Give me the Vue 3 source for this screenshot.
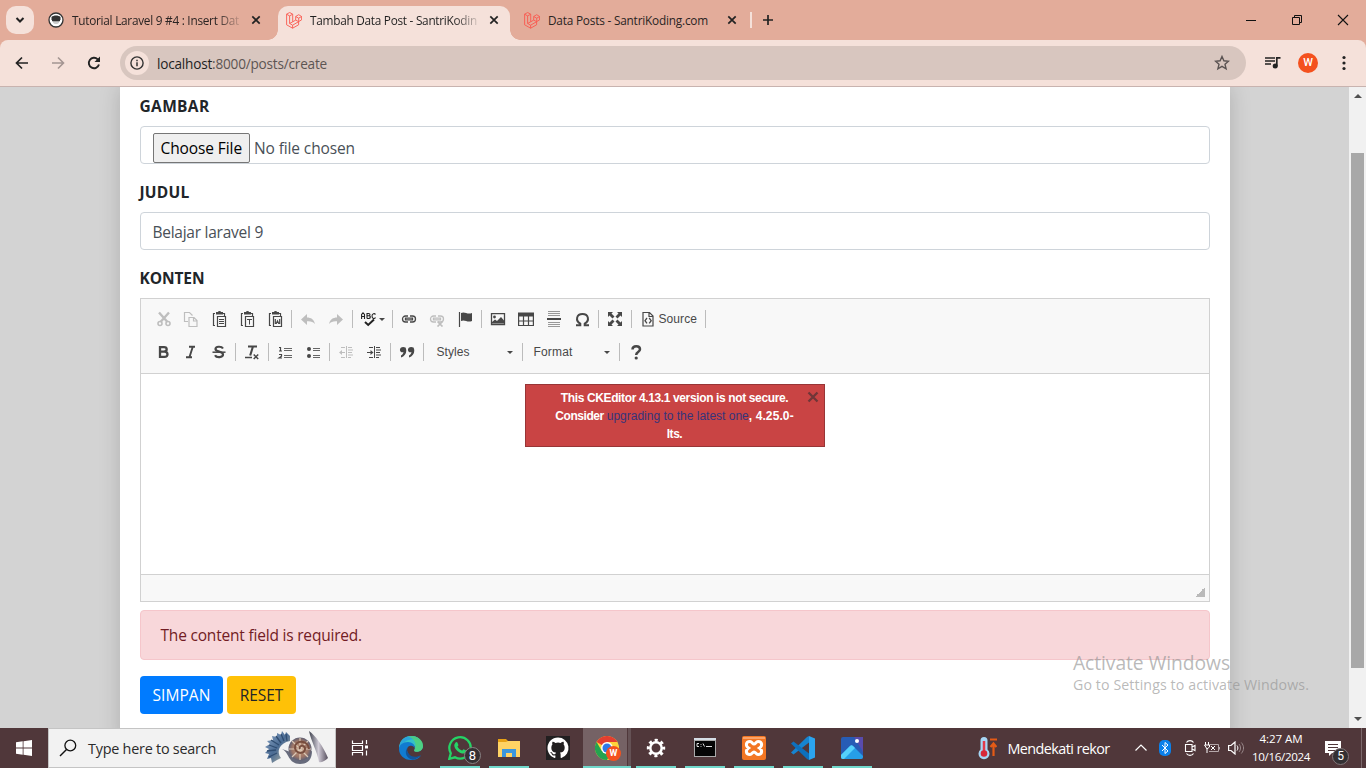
<script setup>
// Spreads the letters of an element so that its text takes a given width.
const vFit = {
  mounted(el, { value }) {
    const range = document.createRange()
    range.selectNodeContents(el)
    const width = range.getBoundingClientRect().width
    el.style.letterSpacing = (value - width) / el.textContent.length + 'px'
  }
}

const K = '#474747'
const clip = `<path d="M4 2.5H2.5v12H4" fill="none" stroke="${K}" stroke-width="1.2"/><path d="M5 1h2a1.5 1 0 0 1 3 0h2v2.500H5z" fill="${K}"/><path d="M12 2.500h1.500v2.500M6.500 5.500h8v10h-8z" fill="none" stroke="${K}" stroke-width="1.200"/>`
const unlinkPath = 'M7 5H4.500a3 3 0 0 0 0 6H7M9 5h2.500a3 3 0 0 1 0 6H9M4.500 7.200h7v1.600h-7z'

const icons = {
  cut: `<g fill="none" stroke="${K}"><path d="M4 1.500L12.500 11M14 1.500L5.500 11" stroke-width="2.400"/><circle cx="5" cy="12.500" r="2" stroke-width="1.600"/><circle cx="13" cy="12.500" r="2" stroke-width="1.600"/></g>`,
  copy: `<path d="M5 10.500H1.500v-9h5l3 3M6 6.500h5l3 3v6H6zM10.500 6.500V10H14" fill="none" stroke="${K}" stroke-width="1.200"/>`,
  paste: clip + `<path d="M8 8.500h5M8 10.500h5M8 12.500h5" stroke="${K}"/>`,
  pasteText: clip + `<path d="M8 8.500h5M10.500 8.500v5" stroke="${K}" fill="none"/>`,
  pasteWord: clip + `<path d="M8.300 8v4.500h1L10.500 10l1.200 2.500h1V8" stroke="${K}" fill="none" stroke-width="1.200"/>`,
  undo: `<path d="M1 8.500L7 3v3.500c4 0 7 2 8 6.500-2-2.300-4.500-3-8-2.700V14z" fill="${K}"/>`,
  redo: `<path d="M15 8.500L9 3v3.500c-4 0-7 2-8 6.500 2-2.300 4.500-3 8-2.700V14z" fill="${K}"/>`,
  spell: `<g fill="none" stroke="#222" stroke-width="1.100"><path d="M.6 8V3.500L2 1.800l1.500 1.700V8M.6 5.500h3M6 7.500v-5h1.500c2 0 2 2.300 0 2.300H6h1.700c2.300 0 2 2.700 0 2.700H6M14.500 3.500c-.7-1.200-3.500-1.500-3.500 1.500s2.700 3 3.500 1.500"/><path d="M4 11l3.200 3L13 8.500" stroke-width="2"/></g>`,
  link: `<path d="${unlinkPath}" fill="none" stroke="${K}" stroke-width="1.300"/>`,
  unlink: `<path d="${unlinkPath}" fill="none" stroke="${K}" stroke-width="1.300"/><path d="M8.500 10.500l5 5M13.500 10.500l-5 5" stroke="${K}" stroke-width="1.700"/>`,
  anchor: `<path d="M2.500 1v15" stroke="${K}" stroke-width="1.200"/><path d="M4 2c4-2 6 2 11 0v8c-5 2-7-2-11 0z" fill="${K}"/>`,
  image: `<path d="M1.500 2.700h13v10.800h-13z" fill="none" stroke="${K}" stroke-width="1.300"/><circle cx="4.500" cy="6" r="1.400" fill="${K}"/><path d="M2 12.500V11l3-2.500 2 1.500 4-4 3 3.500v3z" fill="${K}"/>`,
  table: `<path d="M0 1.500h16v4H0z" fill="${K}"/><path d="M.6 5v9.500h14.800V5M0 10h16M5.500 5v9M10.500 5v9" fill="none" stroke="${K}" stroke-width="1.200"/>`,
  hr: `<path d="M2 .5h12M2 2.500h12M2 4.500h12M2 11.500h12M2 13.500h12M2 15.500h12" stroke="#999"/><path d="M1 8h14" stroke="${K}" stroke-width="2"/>`,
  omega: `<path d="M2 14.200h4.300v-1.500C1 9.500 2.500 3 8.500 3s7.500 6.500 2.200 9.700v1.500H15" fill="none" stroke="${K}" stroke-width="2"/>`,
  maximize: `<path d="M1 1h5L4.500 2.500l3 3-2 2-3-3L1 6zM15 1v5l-1.500-1.500-3 3-2-2 3-3L10 1zM1 15v-5l1.500 1.500 3-3 2 2-3 3L6 15zM15 15h-5l1.500-1.500-3-3 2-2 3 3L15 10z" fill="${K}"/>`,
  source: `<path d="M3 1.500h6.500l3.500 3.500v10H3zM9 2v3.500h4" fill="none" stroke="${K}" stroke-width="1.200"/><path d="M7 7l-2 2.700 2 2.700M9.200 7l2 2.700-2 2.700" fill="none" stroke="${K}" stroke-width="1.300"/>`,
  bold: `<path d="M5 3.100h4c3.600 0 3.600 4.500 0 4.500H5h4.500c4 0 4 5.300 0 5.300H5zV13" fill="none" stroke="${K}" stroke-width="2.300"/>`,
  italic: `<path d="M6 2.700h6M3 13.300h6M9.700 3L6.500 13" fill="none" stroke="${K}" stroke-width="1.900"/>`,
  strike: `<path d="M12 4.500C10.500 2 4.500 2.200 4.500 5c0 3.300 7.500 2 7.500 5.500 0 3.200-6.500 3.500-8 .700" fill="none" stroke="${K}" stroke-width="2.200"/><path d="M1.500 8.200h13" stroke="${K}" stroke-width="1.500"/>`,
  removeFormat: `<path d="M4 2.500h9M8.800 3L6.200 11.500" fill="none" stroke="${K}" stroke-width="2.100"/><path d="M1 13.500h7M9.700 10.500l4.500 4.500M14.200 10.500L9.700 15" stroke="${K}" stroke-width="1.500"/>`,
  numbers: `<path d="M7 4.500h8M7 6.500h8M7 11.500h8M7 13.500h8" stroke="#666"/><path d="M2 3.500h1.500V7M2 7h3M2 10.500h2.500v1.700L2 14h3" fill="none" stroke="${K}" stroke-width="1.200"/>`,
  bullets: `<path d="M8 4.500h7M8 6.500h7M8 11.500h7M8 13.500h7" stroke="#666"/><circle cx="4" cy="5" r="2" fill="${K}"/><circle cx="4" cy="12" r="2" fill="${K}"/>`,
  outdent: `<path d="M8.500 2v12M10 3.500h4M10 6h5M10 8.500h4M10 11h5M10 13.500h3M3 3.500h4M3 13.500h4M2 8.500h5" stroke="${K}"/><path d="M1 8.500L4 6v5z" fill="${K}"/>`,
  indent: `<path d="M8.500 2v12M10 3.500h4M10 6h5M10 8.500h4M10 11h5M10 13.500h3M3 3.500h4M3 13.500h4M1 8.500h5" stroke="${K}"/><path d="M7.500 8.500l-3-2.500v5z" fill="${K}"/>`,
  quote: `<path d="M6.500 3.500C3 2 .5 4 1 6.500c.5 2 2.800 2 3.500 1.500-.2 2-1.500 3-2.500 3.500v2C6.500 12 8.500 7.500 6.500 3.500zM14.500 3.500C11 2 8.500 4 9 6.500c.5 2 2.800 2 3.500 1.500-.2 2-1.500 3-2.500 3.500v2c4.500-1.500 6.500-6 4.500-10z" fill="${K}"/>`,
  help: `<path d="M4.500 5.500C4.500 1.100 12 1.300 12 5.300c0 3-3.800 2.500-3.800 5.700" fill="none" stroke="${K}" stroke-width="2.500"/><circle cx="8.200" cy="14" r="1.600" fill="${K}"/>`
}

const rows = [
  [
    { i: 'cut', off: 1 }, { i: 'copy', off: 1 }, { i: 'paste' }, { i: 'pasteText' }, { i: 'pasteWord' }, { sep: 1 },
    { i: 'undo', off: 1 }, { i: 'redo', off: 1 }, { sep: 1 },
    { i: 'spell', caret: 1, kind: 'spell' }, { sep: 1 },
    { i: 'link' }, { i: 'unlink', off: 1 }, { i: 'anchor' }, { sep: 1 },
    { i: 'image' }, { i: 'table' }, { i: 'hr' }, { i: 'omega' }, { sep: 1 },
    { i: 'maximize' }, { sep: 1 },
    { i: 'source', text: 'Source', fit: 38.500, kind: 'source' }, { sep: 1 }
  ],
  [
    { i: 'bold' }, { i: 'italic' }, { i: 'strike' }, { sep: 1 },
    { i: 'removeFormat' }, { sep: 1 },
    { i: 'numbers' }, { i: 'bullets' }, { sep: 1 },
    { i: 'outdent', off: 1 }, { i: 'indent' }, { sep: 1 },
    { i: 'quote' }, { sep: 1 },
    { text: 'Styles', fit: 33, caret: 1, kind: 'styles' }, { sep: 1 },
    { text: 'Format', fit: 39, caret: 1, kind: 'format' }, { sep: 1 },
    { i: 'help' }
  ]
]

const laravel = `<path d="M.6 2.200L3.700.500l3 1.700v7.600l3-1.700V4.500l3-1.800 2.900 1.800v3.400l-3 1.700v3.200l-6 3.400-6-3.400zM.6 2.200l3 1.700 3.100-1.700M3.600 3.900v7.500l3 1.800 6-3.500M6.700 9.800l-3.100 1.700M9.700 4.500l3 1.700 2.900-1.700M12.700 6.200v3.500M9.700 8.100l3 1.600M6.600 13.200v3" fill="none" stroke="#f9594f" stroke-width=".9"/>`

const apps = [
  { name: 'edge', art: `<path d="M0 13C0 5 5 0 12 0s12 5 12 10-5 6.500-8 5.500c-1.500-.5-.8-1.500-.3-2.500C16.500 10 14 7 10 7 5 7 1 9.500 0 13z" fill="#35c1c9"/><path d="M0 12C1 4 6 0 12 0c5 0 8 2 10 5-6-3-16-3-22 7z" fill="#2aa6dc"/><path d="M13 0c7 .3 11 5 11 10 0 4-4 6-7 5.700-2-.3-2-1-1.300-2.200C18 8 16 3 9 .500z" fill="#55d66b" opacity=".75"/><path d="M0 13c0-4 4-7 9-7 4 0 7 3 6.500 6-1-2-3-2.800-5-2-3 1-3 5-1 8 3 4.500 8 5 12.500 1.500C20 22.500 16.500 24 12 24 5 24 0 19 0 13z" fill="#117bd1"/><path d="M8 12c-3 5 0 11 6 11.800 3-.5 6.500-2.500 8-4.800-5 3-10 2-12.500-1.500C8 15.500 7.500 14 8 12z" fill="#12549b"/>` },
  { name: 'whatsapp', run: 1, badge: '8', art: `<path d="M1.300 22.800l1.500-5.600A10.700 10.700 0 1 1 7 21.300z" fill="none" stroke="#25d366" stroke-width="2.300"/><path d="M7.200 7c.8-1.200 1.800-1.300 2.300-.3l.9 2.200c.1.500-.9 1.400-1 1.700 1 2 2.500 3.200 4.500 4 .6-.1 1.200-1.500 1.700-1.400l2.500 1.300c.3 2.300-1.900 3.500-4 3-4.500-1-8.600-6-7.700-9z" fill="#25d366"/>` },
  { name: 'files', run: 1, art: `<path d="M1 3h8l2 2h12v4H1z" fill="#e8a215"/><path d="M1 6h8l2-1h12v16H1z" fill="#ffd364"/><path d="M5 21v-8h14v8h-4v-4H9v4z" fill="#3a96dd"/>` },
  { name: 'github', art: `<path d="M0 0h24v24H0z" fill="#211f20"/><path transform="translate(1.500 1.500) scale(1.310)" d="M8 0C3.580 0 0 3.580 0 8c0 3.540 2.290 6.530 5.470 7.590.4.070.55-.17.55-.38v-1.490c-2.230.49-2.690-.95-2.690-.95-.36-.92-.89-1.170-.89-1.170-.73-.5.050-.49.050-.49.810.060 1.230.83 1.230.83.72 1.230 1.880.87 2.340.66.070-.52.28-.87.51-1.070-1.780-.2-3.640-.89-3.640-3.950 0-.87.310-1.590.82-2.150-.08-.2-.36-1.020.08-2.120 0 0 .67-.21 2.200.82a7.600 7.600 0 0 1 4 0c1.530-1.030 2.200-.82 2.200-.82.44 1.100.16 1.920.08 2.120.51.56.82 1.280.82 2.150 0 3.070-1.870 3.750-3.650 3.950.29.25.54.73.54 1.480v2.200c0 .21.150.46.55.38A8 8 0 0 0 8 0z" fill="#fff"/>` },
  { name: 'chrome', run: 1, active: 1, art: `<circle cx="12" cy="12" r="12" fill="#fdd43b"/><path d="M12 12L1.600 6A12 12 0 0 1 22.400 6H12z" fill="#e43e30"/><path d="M1.600 6A12 12 0 0 0 12 24l5.200-9-5.200-3L6.800 15z" fill="#24a350"/><circle cx="12" cy="12" r="5.900" fill="#fff"/><circle cx="12" cy="12" r="4.500" fill="#2f79e8"/>` },
  { name: 'settings', run: 1, art: `<circle cx="12" cy="12" r="5.700" fill="none" stroke="#fff" stroke-width="2.500"/><circle cx="12" cy="12" r="7.700" fill="none" stroke="#fff" stroke-width="3" stroke-dasharray="3.020" stroke-dashoffset="1.500"/>` },
  { name: 'terminal', run: 1, art: `<path d="M1 2h22v19H1z" fill="#aaa"/><path d="M2 5h20v15H2z" fill="#060606"/><path d="M1 2h22v2H1z" fill="#d5dde5"/><path d="M6 7.500H4v3h2M8 8v.8M8 10v.8M10 7.500l1.500 3M13 10.500h6" fill="none" stroke="#ddd"/>` },
  { name: 'xampp', run: 1, art: `<rect width="24" height="24" rx="2" fill="#f37623"/><path d="M1 1h22v2H1z" fill="#faa36a"/><path d="M8 5.500c2 0 2.500 2.500 4 2.500s2-2.500 4-2.500c4.500 0 4.500 4.500 1.500 6.500 3 2 3 6.500-1.500 6.500-2 0-2.500-2.500-4-2.500s-2 2.500-4 2.500c-4.500 0-4.500-4.500-1.500-6.500C3.500 10 3.500 5.500 8 5.500z" fill="none" stroke="#fff" stroke-width="3"/>` },
  { name: 'code', run: 1, art: `<path d="M18 0l6 2.500v19L18 24z" fill="#2ba4ef"/><path d="M18 6.500L2.500 18.500 0 16.500 16 1l2-1z" fill="#1684d0"/><path d="M18 17.500L2.500 5.500 0 7.500 16 23l2 1z" fill="#0d70bd"/>` },
  { name: 'photos', run: 1, art: `<rect x="1" y="1" width="22" height="22" rx="2" fill="#275cb5"/><path d="M14 1h9v15z" fill="#594bac"/><path d="M1 19l9-9c1-1 2-1 3 0l10 10v1a2 2 0 0 1-2 2H3a2 2 0 0 1-2-2z" fill="#269fe8"/><path d="M1 19l9-9c1-1 2-1 3 0l2 2L4 23H3a2 2 0 0 1-2-2z" fill="#55d1fc"/><circle cx="17" cy="5" r="2" fill="#fff"/>` }
]
</script>

<template>
  <div class="screen">
    <header class="tabs">
      <div class="menu"><svg width="12" height="12" viewBox="0 0 12 12"><path d="M2.500 4l3.500 3.500L9.500 4" fill="none" stroke="#222" stroke-width="2" /></svg></div>
      <div class="tab first">
        <svg width="16" height="16" viewBox="0 0 16 16"><circle cx="8" cy="8" r="7" fill="#fff" stroke="#333" stroke-width="1.300" /><path d="M3.500 5c2-2 7-2 9 0v3h-9z" fill="#333" /><path d="M5 8.500v2c1 2 5 2 6 0v-2z" fill="#ccc" /><path d="M4 8.500h8" stroke="#333" stroke-width="1.500" /></svg>
        <div class="title fade"><span v-fit="167">Tutorial Laravel 9 #4 : Insert Dat</span></div>
        <svg class="close" width="10" height="10" viewBox="0 0 10 10"><path d="M1.300 1.300l7.400 7.400M8.700 1.300L1.300 8.700" stroke="#222" stroke-width="1.700" /></svg>
      </div>
      <div class="tab active">
        <svg width="16" height="17" viewBox="0 0 16 17" v-html="laravel" />
        <div class="title fade"><span v-fit="167">Tambah Data Post - SantriKodin</span></div>
        <svg class="close" width="10" height="10" viewBox="0 0 10 10"><path d="M1.300 1.300l7.400 7.400M8.700 1.300L1.300 8.700" stroke="#222" stroke-width="1.700" /></svg>
      </div>
      <div class="tab last">
        <svg width="16" height="17" viewBox="0 0 16 17" v-html="laravel" />
        <div class="title"><span v-fit="160">Data Posts - SantriKoding.com</span></div>
        <svg class="close" width="10" height="10" viewBox="0 0 10 10"><path d="M1.300 1.300l7.400 7.400M8.700 1.300L1.300 8.700" stroke="#222" stroke-width="1.700" /></svg>
      </div>
      <i class="tabline"></i>
      <svg class="plus" width="12" height="12" viewBox="0 0 12 12"><path d="M6 1v10M1 6h10" stroke="#222" stroke-width="1.700" /></svg>
      <div class="window">
        <svg width="12" height="12" viewBox="0 0 12 12"><path d="M1 6.500h10" stroke="#111" /></svg>
        <svg width="12" height="12" viewBox="0 0 12 12"><path d="M1.500 3.500h7v7h-7zM3.500 3.500v-2h7v7h-2" fill="none" stroke="#111" /></svg>
        <svg width="12" height="12" viewBox="0 0 12 12"><path d="M1 1l10 10M11 1L1 11" stroke="#111" stroke-width="1.100" /></svg>
      </div>
    </header>

    <div class="barback">
      <div class="bar">
        <svg class="nav" width="16" height="16" viewBox="0 0 16 16"><path d="M14 8H3M8 2.500L2.500 8 8 13.500" fill="none" stroke="#222" stroke-width="1.700" /></svg>
        <svg class="nav" width="16" height="16" viewBox="0 0 16 16"><path d="M2 8h11M8 2.500L13.500 8 8 13.500" fill="none" stroke="#a39592" stroke-width="1.600" /></svg>
        <svg class="nav" width="16" height="16" viewBox="0 0 16 16"><path d="M13 9.500A5.200 5.200 0 1 1 11.700 4.300L13 5.500" fill="none" stroke="#222" stroke-width="1.900" /><path d="M14 1.500v5.500H8.500z" fill="#222" /></svg>
        <div class="omnibox">
          <div class="info"><svg width="14" height="14" viewBox="0 0 14 14"><circle cx="7" cy="7" r="6.100" fill="none" stroke="#333" stroke-width="1.400" /><path d="M7 6.300V10.300M7 3.700v1.500" stroke="#333" stroke-width="1.500" /></svg></div>
          <div class="url" v-fit="170">localhost<span>:8000/posts/create</span></div>
          <svg class="star" width="16" height="16" viewBox="0 0 16 16"><path d="M8 1.500l1.900 4.300 4.600.4-3.500 3.100 1.100 4.600L8 11.400l-4.100 2.500L5 9.300 1.500 6.200l4.600-.4z" fill="none" stroke="#5a5352" stroke-width="1.400" /></svg>
        </div>
        <svg class="music" width="16" height="14" viewBox="0 0 16 14"><path d="M0 2h10M0 5h10M0 8h6" stroke="#222" stroke-width="1.600" /><path d="M11.800 10.500V1.800H15.500" fill="none" stroke="#222" stroke-width="1.700" /><circle cx="10.200" cy="10" r="2.500" fill="#222" /></svg>
        <div class="avatar">W</div>
        <svg class="dots" width="4" height="16" viewBox="0 0 4 16"><circle cx="2" cy="2.500" r="1.600" fill="#222" /><circle cx="2" cy="8" r="1.600" fill="#222" /><circle cx="2" cy="13.500" r="1.600" fill="#222" /></svg>
      </div>
    </div>

    <main class="page">
      <div class="canvas">
        <section class="card">
          <label><span v-fit="70">GAMBAR</span></label>
          <div class="field file"><div class="choose"><span v-fit="81.500">Choose File</span></div><span v-fit="101">No file chosen</span></div>
          <label><span v-fit="50">JUDUL</span></label>
          <div class="field"><span v-fit="110.500">Belajar laravel 9</span></div>
          <label><span v-fit="65">KONTEN</span></label>
          <div class="editor">
            <div class="tools">
              <div v-for="(row, r) in rows" :key="r" class="row">
                <template v-for="(t, n) in row" :key="n">
                  <i v-if="t.sep" class="sep"></i>
                  <div v-else class="tool" :class="[t.kind, { off: t.off }]">
                    <svg v-if="t.i" width="16" height="16" viewBox="0 0 16 16" v-html="icons[t.i]" />
                    <span v-if="t.text" v-fit="t.fit">{{ t.text }}</span>
                    <b v-if="t.caret" class="caret"></b>
                  </div>
                </template>
              </div>
            </div>
            <div class="writing">
              <div class="notice">
                <p><span v-fit="227.500">This CKEditor 4.13.1 version is not secure.</span></p>
                <p><span v-fit="51.500">Consider&nbsp;</span><a v-fit="142">upgrading to the latest one</a><span v-fit="45">, 4.25.0-</span></p>
                <p><span v-fit="15.500">lts.</span></p>
                <svg width="12" height="12" viewBox="0 0 12 12"><path d="M1.500 1.500l9 9M10.500 1.500l-9 9" stroke="#703638" stroke-width="2.300" /></svg>
              </div>
            </div>
            <div class="foot"><i></i></div>
          </div>
          <div class="alert"><span v-fit="201.500">The content field is required.</span></div>
          <div class="buttons">
            <div class="save"><span v-fit="58">SIMPAN</span></div>
            <div class="reset"><span v-fit="43.500">RESET</span></div>
          </div>
        </section>
      </div>
      <div class="scroll"><i class="up"></i><i class="thumb"></i><i class="down"></i></div>
    </main>

    <div class="watermark">
      <div class="big"><span v-fit="157">Activate Windows</span></div>
      <div class="small"><span v-fit="236">Go to Settings to activate Windows.</span></div>
    </div>

    <footer class="taskbar">
      <div class="start"><svg width="16" height="16" viewBox="0 0 16 16"><path d="M0 2.200l6.700-.9v6.200H0zM7.500 1.200L16 0v7.500H7.500zM0 8.400h6.700v6.300L0 13.800zM7.500 8.400H16V16l-8.500-1.200z" fill="#fff" /></svg></div>
      <div class="search">
        <svg width="18" height="18" viewBox="0 0 18 18"><circle cx="11.300" cy="6.500" r="5.400" fill="none" stroke="#111" stroke-width="1.300" /><path d="M7.500 10.500L1 17" stroke="#111" stroke-width="1.400" /></svg>
        <span v-fit="128">Type here to search</span>
        <svg class="shells" width="66" height="38" viewBox="0 0 66 38">
          <defs>
            <linearGradient id="cone"><stop offset="0" stop-color="#3d414d" /><stop offset=".5" stop-color="#d0cbd6" /><stop offset="1" stop-color="#554e5c" /></linearGradient>
            <linearGradient id="wave" x2="1" y2="1"><stop offset="0" stop-color="#8fa9c8" /><stop offset=".5" stop-color="#4b6c94" /><stop offset="1" stop-color="#c7bfa2" /></linearGradient>
            <radialGradient id="spiral"><stop offset="0" stop-color="#c99b7c" /><stop offset=".7" stop-color="#9c7566" /><stop offset="1" stop-color="#606073" /></radialGradient>
          </defs>
          <path d="M26 7l-4-4-1 3-3-4-1 4-4-2v4l-5-1 1 4-6 1 3 3-5 3 4 2-4 4 4 1-2 5 4-1 1 5 5-3 4-2c-5-6-2-15 9-17z" fill="url(#wave)" />
          <path d="M5 16l8 3M7 11l8 5M12 7l5 7M17 5l3 7M22 5l1 7M3 22l9-1M5 28l8-4" stroke="#304d71" stroke-width="1.300" />
          <path d="M18 20c7 3 6 15 18 15 9 0 12-6 12-13L35 26z" fill="#676b7c" />
          <circle cx="36" cy="20" r="11.500" fill="url(#spiral)" /><path d="M36 9v22M25 20h22M28 12l16 16M44 12L28 28" stroke="#dbc8b5" stroke-width="1.200" />
          <path d="M36 20c-2-3 4-5 5-1 1 6-9 7-10 0-1-8 13-9 14 1" fill="none" stroke="#774d3e" stroke-width="2" />
          <path d="M45 2c7 5 14 15 19 27-3 3-7 5-9 4C53 22 47 12 45 2z" fill="url(#cone)" />
        </svg>
      </div>
      <div class="taskview"><svg width="18" height="18" viewBox="0 0 18 18"><path d="M1.500 1.500v3h10v-3M1.500 16.500v-3h10v3M1.500 6.500h10v5h-10zM15.500 1v4M15.500 11.500v5" fill="none" stroke="#fff" stroke-width="1.200" /><path d="M14 6.500h3v3h-3z" fill="#fff" /></svg></div>
      <div v-for="app in apps" :key="app.name" class="app" :class="{ run: app.run, current: app.active }">
        <svg width="24" height="24" viewBox="0 0 24 24" v-html="app.art" />
        <em v-if="app.badge" class="count">{{ app.badge }}</em>
        <em v-if="app.active" class="profile">W</em>
      </div>
      <div class="tray">
        <svg class="thermo" width="19" height="24" viewBox="0 0 19 24"><path d="M2.500 4.500a3.500 3.500 0 0 1 7 0v9a5.500 5.500 0 1 1-7 0z" fill="#a6d5f4" /><path d="M6 5v12" stroke="#e13a49" stroke-width="2.500" /><circle cx="6" cy="17.500" r="3.300" fill="#d72737" /><path d="M12 3.500h7M15.500 20V8M12.500 11l3-3.500 3 3.500" stroke="#e45b16" stroke-width="2.200" fill="none" /></svg>
        <span class="news" v-fit="102">Mendekati rekor</span>
        <svg class="chev" width="12" height="12" viewBox="0 0 12 12"><path d="M.5 8.500L6 3l5.500 5.500" stroke="#fff" stroke-width="1.200" fill="none" /></svg>
        <svg class="bt" width="12" height="16" viewBox="0 0 12 16"><rect width="12" height="16" rx="5" fill="#0b80ea" /><path d="M3 5l6 6-3 2.500v-11L9 5l-6 6" fill="none" stroke="#fff" /></svg>
        <svg class="meet" width="12" height="16" viewBox="0 0 12 16"><path d="M2.500 2.500C4 0 8 0 9.500 2.500M2.500 13.500c1.500 2.500 5.500 2.500 7 0M1.500 4.500h6.500v7H1.500zM8 7l3-1.500v5L8 9" fill="none" stroke="#fff" stroke-width="1.100" /></svg>
        <svg class="power" width="16" height="12" viewBox="0 0 16 12"><path d="M1.500 0v3M4.500 0v3M.5 3h5v2L3 7zM3 6.500V11" fill="none" stroke="#fff" /><path d="M5.500 2.500h9v7H5M15.500 5v2.500" fill="none" stroke="#b5a8aa" /><path d="M7 4l4 4M11 4L7 8" stroke="#fff" /></svg>
        <svg class="sound" width="17" height="14" viewBox="0 0 17 14"><path d="M.6 4.500H3l4-3.500v12l-4-3.500H.6z" fill="none" stroke="#fff" stroke-width="1.200" /><path d="M9 4.500c1.200 1.500 1.200 3.500 0 5" fill="none" stroke="#fff" /><path d="M11 3c2 2.500 2 5.500 0 8M13.300 1.500c3 3.500 3 7.500 0 11" fill="none" stroke="#98888a" /></svg>
        <div class="clock"><div><span v-fit="43">4:27 AM</span></div><div><span v-fit="58">10/16/2024</span></div></div>
        <div class="notes"><svg width="16" height="15" viewBox="0 0 16 15"><path d="M0 0h16v12H7l-3 3v-3H0z" fill="#fff" /><path d="M3 3.500h10M3 6.500h10M3 9.500h7" stroke="#50373a" /></svg><em>5</em></div>
      </div>
      <i class="desk"></i>
    </footer>
  </div>
</template>

<style>
html, body { margin: 0; overflow: hidden; }
</style>

<style scoped>
* { box-sizing: border-box; }
.screen { position: relative; width: 1366px; height: 768px; overflow: hidden; display: flex; flex-direction: column; background: #fff; font-family: "Open Sans", "Noto Sans", sans-serif; font-size: 15.500px; color: #212529; white-space: nowrap; }
svg { display: block; flex: none; }
em { font-style: normal; }
.tabs { height: 40px; flex: none; display: flex; align-items: center; background: #e3ac9a; }
.menu { width: 28px; height: 28px; margin-left: 6px; border-radius: 10px; background: #f5e1da; display: grid; place-items: center; }
.tab { display: flex; align-items: center; height: 40px; font-size: 11.800px; color: #2a2423; }
.tab.first { width: 244px; padding-left: 14px; }
.tab.active { position: relative; width: 232px; height: 34px; margin-top: 6px; padding: 0 0 6px 8px; background: #f5e1da; border-radius: 10px 10px 0 0; color: #1f1f1f; }
.tab.active::before, .tab.active::after { content: ""; position: absolute; bottom: 0; width: 10px; height: 10px; }
.tab.active::before { left: -10px; background: radial-gradient(circle at 0 0, transparent 9.500px, #f5e1da 10px); }
.tab.active::after { right: -10px; background: radial-gradient(circle at 100% 0, transparent 9.500px, #f5e1da 10px); }
.tab.last { width: 241px; padding-left: 14px; }
.title { width: 168px; margin-left: 8px; }
.fade { -webkit-mask-image: linear-gradient(90deg, #000 144px, transparent 172px); mask-image: linear-gradient(90deg, #000 144px, transparent 172px); }
.close { margin-left: 11px; }
.tabline { width: 2px; height: 16px; margin-left: -1px; background: #f5e1da; }
.plus { margin-left: 10px; }
.window { display: flex; gap: 34px; margin-left: auto; padding-right: 17px; }
.barback { height: 47px; flex: none; background: #e3ac9a; }
.bar { height: 47px; display: flex; align-items: center; background: #f5e1da; border-bottom: 1px solid #c8b3af; border-radius: 8px 8px 0 0; padding-left: 14px; }
.nav { margin-right: 20px; }
.omnibox { width: 1126px; height: 34px; margin-left: -2px; border-radius: 17px; background: #d8c6bf; display: flex; align-items: center; padding: 0 16px 0 5px; }
.info { width: 24px; height: 24px; border-radius: 50%; background: #f5e1da; display: grid; place-items: center; }
.url { margin-left: 8px; font-size: 13.600px; color: #1f1f1f; }
.url span { color: #5d5553; }
.star { margin-left: auto; }
.music { margin-left: 19px; }
.avatar { width: 20px; height: 20px; margin-left: 17px; border-radius: 50%; background: #f4511e; color: #fff; font: 500 11px/20px Roboto, sans-serif; text-align: center; }
.dots { margin-left: 24px; }
.page { height: 641px; flex: none; display: flex; }
.canvas { width: 1349px; background: #d3d3d3; padding-left: 120px; overflow: hidden; }
.card { width: 1110px; height: 660px; padding: 7px 20px 0; background: #fff; box-shadow: 0 0 20px rgba(0, 0, 0, .17); }
label { display: block; height: 24px; line-height: 24px; margin-bottom: 8px; font-weight: 700; font-size: 15.500px; }
label span { margin-left: -.5px; }
.field { height: 38px; margin-bottom: 16px; padding: 2px 12px 0 11.500px; border: 1px solid #ced4da; border-radius: 4px; display: flex; align-items: center; color: #495057; }
.file { padding: 6px 12px 0; align-items: flex-start; overflow: hidden; line-height: 30px; }
.choose { height: 30px; margin-right: 4px; padding: 0 7px; border: 1px solid #767676; border-radius: 2px; background: #efefef; color: #000; width: 97px; line-height: 29px; }
.choose span { margin-left: -.5px; }
.editor { height: 304px; border: 1px solid #d1d1d1; font-family: Arial, "Liberation Sans", sans-serif; margin-bottom: 8px; }
.tools { height: 75px; padding: 3px 0 0 8px; background: #f8f8f8; border-bottom: 1px solid #d1d1d1; }
.row { height: 33px; display: flex; align-items: center; }
.tool { width: 28px; display: flex; align-items: center; justify-content: center; font-size: 12px; color: #484848; }
.tool.off { opacity: .32; }
.sep { width: 5px; height: 18px; background: linear-gradient(90deg, transparent 2px, #bcbcbc 2px, #bcbcbc 3px, transparent 3px); }
.caret { width: 0; height: 0; border: 3px solid transparent; border-top-color: #484848; border-bottom: 0; margin-top: 1px; }
.tool.spell { width: 35px; justify-content: flex-start; padding-left: 6px; }
.spell .caret { margin-left: 2px; }
.tool.source { width: 69px; justify-content: flex-start; padding-left: 5.500px; gap: 3px; }
.tool.styles { width: 94px; justify-content: space-between; padding: 0 7px 0 10.500px; }
.tool.format { width: 92px; justify-content: space-between; padding: 0 7px 0 8.500px; }
.writing { height: 200px; padding-top: 10px; background: #fff; }
.notice { position: relative; width: 300px; height: 63px; margin: 0 auto; padding: 4px 1px 0 0; background: #c94444; border: 1px solid #983536; color: #fff; font-size: 12px; font-weight: 700; text-align: center; }
.notice p { margin: 0; height: 18px; line-height: 18px; }
.notice a { color: #36347a; font-weight: 400; }
.notice svg { position: absolute; top: 6px; right: 5px; }
.foot { height: 27px; background: #f8f8f8; border-top: 1px solid #d1d1d1; display: flex; justify-content: flex-end; align-items: flex-end; padding: 0 4px 4px 0; }
.foot i { width: 10px; height: 10px; background: linear-gradient(135deg, transparent 50%, #bababa 50%); }
.alert { height: 50px; margin-bottom: 16px; padding: 0 20px 0 19.500px; line-height: 49px; background: #f8d7da; border: 1px solid #f5c6cb; border-radius: 4px; color: #721c24; }
.buttons { display: flex; gap: 4px; line-height: 38px; }
.save, .reset { height: 38px; border-radius: 4px; text-align: center; }
.save { width: 83px; background: #007bff; color: #fff; }
.reset { width: 69px; background: #ffc107; color: #212529; }
.scroll { width: 17px; background: #f1f1f1; display: flex; flex-direction: column; align-items: center; }
.up, .down { width: 0; height: 0; border: 4px solid transparent; }
.up { border-top: 0; border-bottom-color: #505050; margin-top: 7px; }
.down { border-bottom: 0; border-top-color: #505050; margin-top: 49px; }
.thumb { width: 13px; height: 515px; margin-top: 55px; background: #a8a8a8; }
.watermark { position: absolute; left: 1073px; top: 649px; color: rgba(145, 145, 145, .64); }
.big { font-size: 19.300px; line-height: 27px; }
.small { font-size: 14.200px; line-height: 20px; margin-top: -1px; }
.taskbar { height: 40px; flex: none; display: flex; background: #50373a; color: #fff; }
.start { width: 48px; display: grid; place-items: center; }
.search { width: 288px; border: 1px solid #c4c4c4; background: #f2f2f2; color: #2b2b2b; display: flex; align-items: center; font-size: 14.400px; padding-left: 10px; }
.search > span { margin-left: 11px; }
.shells { margin-left: 48px; }
.taskview { width: 51px; padding-left: 15px; display: flex; align-items: center; }
.app { position: relative; width: 49px; height: 40px; display: flex; padding-left: 12px; align-items: center; }
.run::after { content: ""; position: absolute; left: 4px; bottom: 0; width: 40px; height: 2px; background: #70d8cb; }
.current { background: linear-gradient(90deg, #756265 44px, #50383b 44px, #50383b 45px, #655255 45px, #655255 48px, transparent 48px); }
.current::after { left: 0; width: 48px; }
.count, .profile { position: absolute; border-radius: 50%; text-align: center; font-family: Roboto, sans-serif; }
.count { left: 28px; top: 19px; width: 17px; height: 17px; background: #353033; border: 1px solid #898284; font-size: 13px; line-height: 15px; }
.profile { left: 23px; top: 18px; width: 15px; height: 15px; background: #f4511e; font-size: 9px; font-weight: 700; line-height: 15px; }
.tray { display: flex; align-items: center; margin-left: 100px; font-size: 14.400px; }
.tray .thermo { margin-left: 1px; }
.news { width: 102px; margin-left: 10.500px; }
.chev { margin-left: 25.500px; }
.bt { margin-left: 12px; }
.meet { margin-left: 13px; }
.power { margin-left: 8px; }
.sound { margin-left: 8px; }
.clock { width: 60px; margin-left: 6px; font-size: 11.600px; line-height: 18px; text-align: center; }
.notes { position: relative; margin-left: 14px; }
.notes em { position: absolute; left: 7px; top: 7px; width: 17px; height: 17px; border-radius: 50%; border: 1px solid #817679; background: #333033; text-align: center; font: 12px/15px Roboto, sans-serif; }
.desk { width: 1px; margin: 0 4px 0 auto; background: #7b686b; }
</style>
